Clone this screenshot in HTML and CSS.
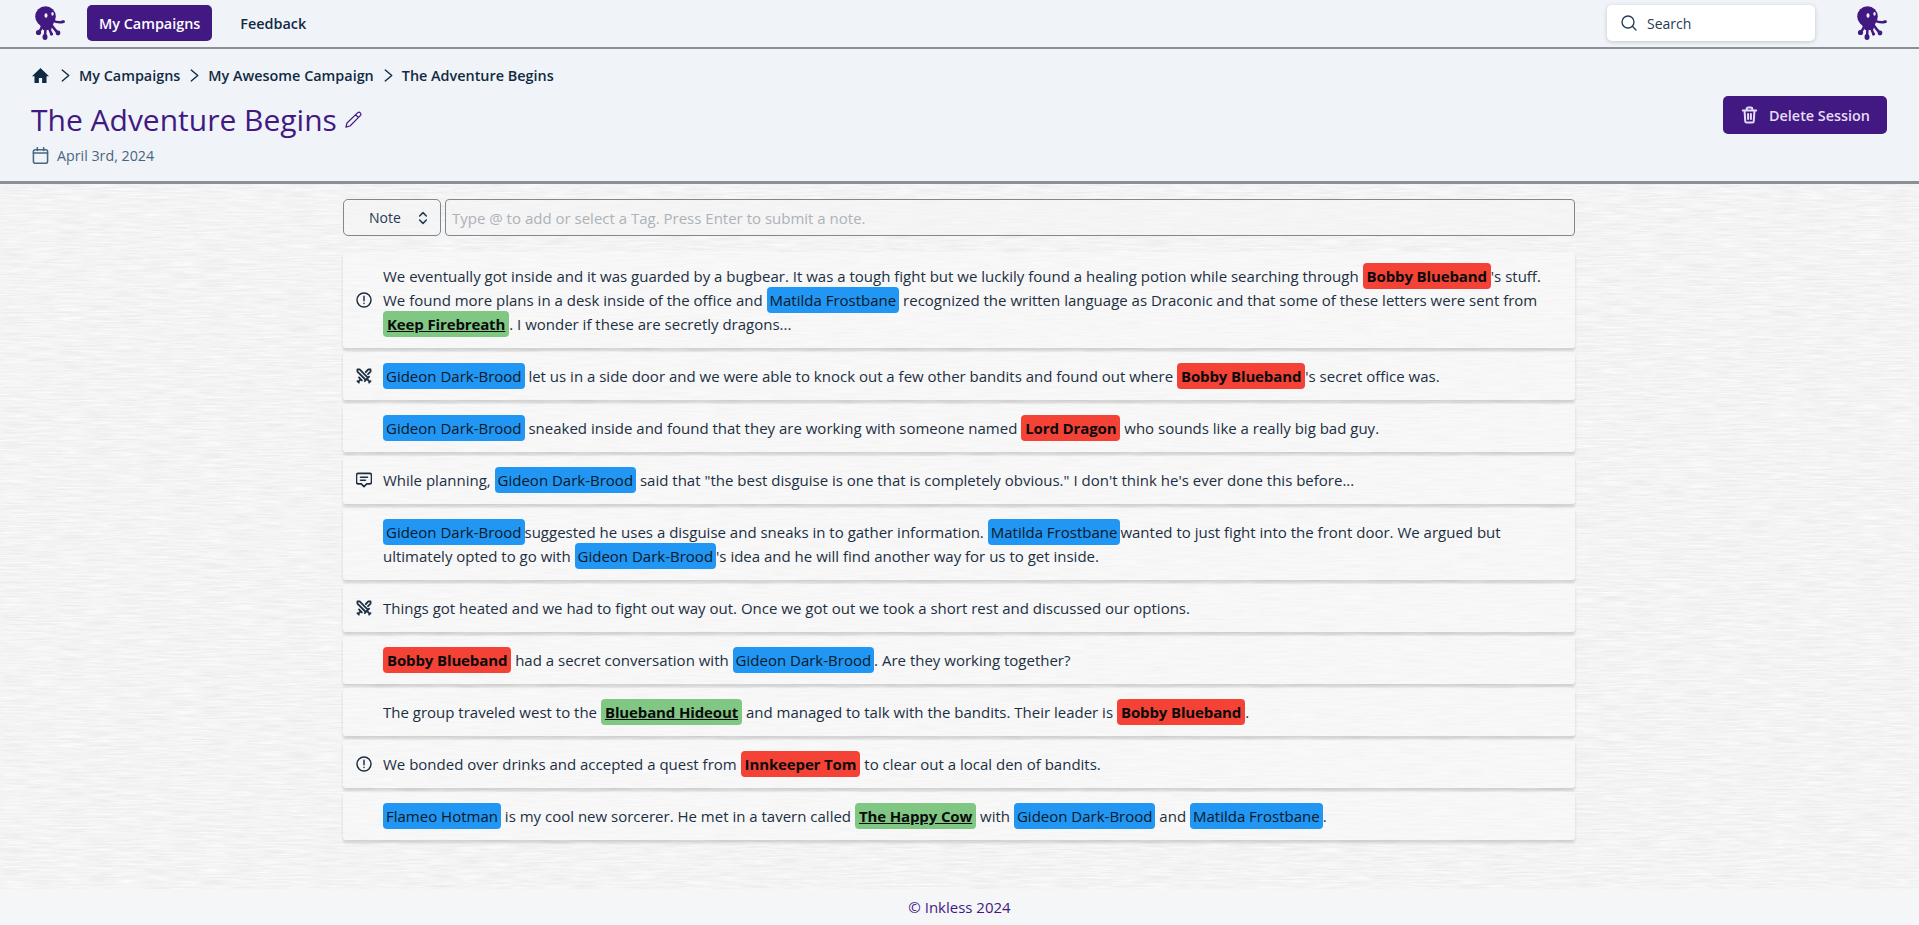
FILE: index.html
```html
<!DOCTYPE html>
<html lang="en">
<head>
<meta charset="utf-8">
<title>The Adventure Begins</title>
<link rel="stylesheet" href="styles.css">
</head>
<body>
<svg class="defs" width="0" height="0" aria-hidden="true">
  <defs>
    <symbol id="octo" viewBox="0 0 30 34">
      <circle cx="10.500" cy="10.500" r="10.300" fill="#421983"/>
      <path fill="#421983" d="M3 16h16l-3 8H8Z"/>
      <g fill="none" stroke="#421983" stroke-width="2.500" stroke-linecap="round">
        <path d="M7 20.500C6 24 4.500 25.500 2.500 26.500"/>
        <path d="M10.500 22 10 31"/>
        <path d="M14 21c.6 3 1.300 5 2.500 7"/>
        <path d="M15 17c2.500 3.500 4.500 6.500 7.500 9.500"/>
        <path d="M18 14.500c3 2 6 2 10 1.500"/>
      </g>
      <circle cx="3.500" cy="26.500" r="2.600" fill="#421983"/>
      <ellipse cx="10" cy="31" rx="2.500" ry="3" fill="#421983"/>
      <circle cx="16.500" cy="28" r="1.600" fill="#421983"/>
      <circle cx="23" cy="27" r="2.400" fill="#421983"/>
      <ellipse cx="28" cy="15.700" rx="2" ry="1.400" fill="#421983"/>
      <ellipse cx="11" cy="9.500" rx="1.500" ry="2.200" fill="#f0f4f8"/>
      <ellipse cx="17.500" cy="7.800" rx="1.200" ry="1.900" fill="#f0f4f8"/>
    </symbol>
    <symbol id="alert" viewBox="0 0 24 24" fill="none" stroke="currentColor" stroke-width="2.200" stroke-linecap="round">
      <circle cx="12" cy="12" r="10.500"/><path d="M12 6.500v6.500M12 17v.1"/>
    </symbol>
    <symbol id="swords" viewBox="1 1 22 22" fill="none" stroke="currentColor" stroke-width="2.500" stroke-linecap="round" stroke-linejoin="round">
      <path d="M14.500 17.500 3 6V3h3l11.500 11.500M13 19l6-6M16 16l4 4M19 21l2-2M14.500 6.500 18 3h3v3l-3.500 3.500M5 14l4 4M7 17l-3 3M3 19l2 2"/>
    </symbol>
    <symbol id="chat" viewBox="0.500 0.500 23 23" fill="none" stroke="currentColor" stroke-width="2.300" stroke-linecap="round" stroke-linejoin="round">
      <path d="M4 2.500h16A2.800 2.800 0 0 1 22.800 5.300v9.400A2.800 2.800 0 0 1 20 17.500h-4l-4 4-4-4H4a2.800 2.800 0 0 1-2.800-2.800V5.300A2.800 2.800 0 0 1 4 2.500Z"/><path d="M7 8h10M7 12.300h7"/>
    </symbol>
  </defs>
</svg>

<header class="topbar">
  <svg class="logo"><use href="#octo"/></svg>
  <a class="nav-link nav-active">My Campaigns</a>
  <a class="nav-link">Feedback</a>
  <div class="spacer"></div>
  <div class="search">
    <svg class="search-icon" viewBox="0 0 24 24" fill="none" stroke="currentColor" stroke-width="2" stroke-linecap="round"><circle cx="10.500" cy="10.500" r="9"/><path d="m17 17 5.500 5.500"/></svg>
    <span>Search</span>
  </div>
  <svg class="logo logo-right"><use href="#octo"/></svg>
</header>

<section class="pagehead">
  <div class="pagehead-main">
    <nav class="crumbs">
      <svg class="home" viewBox="0 0 24 24" fill="currentColor"><path d="M12 1.500 0 13h3.500v9.500h6.200v-7h4.600v7h6.200V13H24L12 1.500Z"/></svg>
      <svg class="chev" viewBox="0 0 24 24" fill="none" stroke="currentColor" stroke-width="2.600" stroke-linecap="round" stroke-linejoin="round"><path d="m6 2 12 10L6 22"/></svg>
      <span>My Campaigns</span>
      <svg class="chev" viewBox="0 0 24 24" fill="none" stroke="currentColor" stroke-width="2.600" stroke-linecap="round" stroke-linejoin="round"><path d="m6 2 12 10L6 22"/></svg>
      <span>My Awesome Campaign</span>
      <svg class="chev" viewBox="0 0 24 24" fill="none" stroke="currentColor" stroke-width="2.600" stroke-linecap="round" stroke-linejoin="round"><path d="m6 2 12 10L6 22"/></svg>
      <span>The Adventure Begins</span>
    </nav>
    <div class="title-row">
      <h1>The Adventure Begins</h1>
      <svg class="pencil" viewBox="0 0 24 24" fill="none" stroke="currentColor" stroke-width="1.600" stroke-linejoin="round"><path d="M18 2.500a2.600 2.600 0 0 1 3.700 3.700L8 20l-5.500 1.500L4 16 18 2.500ZM15.500 5l3.700 3.700"/></svg>
    </div>
    <div class="date">
      <svg class="cal" viewBox="0 0 24 24" fill="none" stroke="currentColor" stroke-width="2.200" stroke-linecap="round"><rect x="2" y="4" width="20" height="19" rx="2.500"/><path d="M7.500 1v4M16.500 1v4M2 8.500h20"/></svg>
      <span>April 3rd, 2024</span>
    </div>
  </div>
  <button class="delete">
    <svg class="trash" viewBox="0 0 24 24" fill="none" stroke="currentColor" stroke-width="2.800" stroke-linecap="round" stroke-linejoin="round"><path d="M2.500 5.500h19M8 5V3.500A2 2 0 0 1 10 1.500h4a2 2 0 0 1 2 2V5M5 5.500l1 15.500a1.800 1.800 0 0 0 1.800 1.500h8.400A1.800 1.800 0 0 0 18 21l1-15.500M10 10.500v7M14 10.500v7"/></svg>
    Delete Session
  </button>
</section>

<main class="main">
  <svg class="paper" width="100%" height="100%" aria-hidden="true">
    <filter id="grain" x="0" y="0" width="100%" height="100%" color-interpolation-filters="sRGB">
      <feTurbulence type="fractalNoise" baseFrequency="0.035 0.6" numOctaves="3" seed="4"/>
      <feColorMatrix type="matrix" values="0.09 0 0 0 0.91  0.09 0 0 0 0.91  0.09 0 0 0 0.91  0 0 0 0 1"/>
    </filter>
    <rect width="100%" height="100%" filter="url(#grain)"/>
  </svg>
  <div class="column">
    <form class="entry">
      <div class="select">
        <span>Note</span>
        <svg class="updown" viewBox="0 0 24 24" fill="none" stroke="currentColor" stroke-width="2.400" stroke-linecap="round" stroke-linejoin="round"><path d="m7 9 5-5 5 5M7 15l5 5 5-5"/></svg>
      </div>
      <input class="note-input" type="text" placeholder="Type @ to add or select a Tag. Press Enter to submit a note.">
    </form>

    <ul class="notes">
      <li class="note">
        <svg class="note-icon"><use href="#alert"/></svg>
        <p>We eventually got inside and it was guarded by a bugbear. It was a tough fight but we luckily found a healing potion while searching through <b class="tag foe">Bobby Blueband</b>'s stuff. We found more plans in a desk inside of the office and <span class="tag pc">Matilda Frostbane</span> recognized the written language as Draconic and that some of these letters were sent from <b class="tag place">Keep Firebreath</b>. I wonder if these are secretly dragons...</p>
      </li>
      <li class="note">
        <svg class="note-icon"><use href="#swords"/></svg>
        <p><span class="tag pc">Gideon Dark-Brood</span> let us in a side door and we were able to knock out a few other bandits and found out where <b class="tag foe">Bobby Blueband</b>'s secret office was.</p>
      </li>
      <li class="note">
        <span class="note-icon"></span>
        <p><span class="tag pc">Gideon Dark-Brood</span> sneaked inside and found that they are working with someone named <b class="tag foe">Lord Dragon</b> who sounds like a really big bad guy.</p>
      </li>
      <li class="note">
        <svg class="note-icon"><use href="#chat"/></svg>
        <p>While planning, <span class="tag pc">Gideon Dark-Brood</span> said that "the best disguise is one that is completely obvious." I don't think he's ever done this before...</p>
      </li>
      <li class="note">
        <span class="note-icon"></span>
        <p><span class="tag pc">Gideon Dark-Brood</span>suggested he uses a disguise and sneaks in to gather information. <span class="tag pc">Matilda Frostbane</span>wanted to just fight into the front door. We argued but ultimately opted to go with <span class="tag pc">Gideon Dark-Brood</span>'s idea and he will find another way for us to get inside.</p>
      </li>
      <li class="note">
        <svg class="note-icon"><use href="#swords"/></svg>
        <p>Things got heated and we had to fight out way out. Once we got out we took a short rest and discussed our options.</p>
      </li>
      <li class="note">
        <span class="note-icon"></span>
        <p><b class="tag foe">Bobby Blueband</b> had a secret conversation with <span class="tag pc">Gideon Dark-Brood</span>. Are they working together?</p>
      </li>
      <li class="note">
        <span class="note-icon"></span>
        <p>The group traveled west to the <b class="tag place">Blueband Hideout</b> and managed to talk with the bandits. Their leader is <b class="tag foe">Bobby Blueband</b>.</p>
      </li>
      <li class="note">
        <svg class="note-icon"><use href="#alert"/></svg>
        <p>We bonded over drinks and accepted a quest from <b class="tag foe">Innkeeper Tom</b> to clear out a local den of bandits.</p>
      </li>
      <li class="note">
        <span class="note-icon"></span>
        <p><span class="tag pc">Flameo Hotman</span> is my cool new sorcerer. He met in a tavern called <b class="tag place">The Happy Cow</b> with <span class="tag pc">Gideon Dark-Brood</span> and <span class="tag pc">Matilda Frostbane</span>.</p>
      </li>
    </ul>
  </div>
</main>

<footer class="footer">© Inkless 2024</footer>
</body>
</html>
```
FILE: styles.css
```css
* { box-sizing: border-box; }
html, body { height: 100%; }
body {
  margin: 0;
  display: flex;
  flex-direction: column;
  height: 925px;
  overflow: hidden;
  font-family: "Open Sans", "Noto Sans", sans-serif;
  font-size: 14px;
  color: #102a43;
  background: #f0f4f8;
}
.defs { position: absolute; }

.topbar {
  display: flex;
  align-items: center;
  height: 49px;
  flex: none;
  padding: 0 32px 1px 35px;
  border-bottom: 2px solid #8d8f96;
  background: #f0f4f8;
}
.logo { width: 30px; height: 34px; margin: 0 22px 0 0; flex: none; }
.logo-right { margin: 0; }
.nav-link {
  display: flex;
  align-items: center;
  height: 36px;
  padding: 0 12px;
  margin-right: 16px;
  border-radius: 5px;
  font-weight: 600;
  font-size: 14.400px;
  color: #102a43;
}
.nav-active { background: #421983; color: #fff; }
.spacer { flex: 1; }
.search {
  display: flex;
  align-items: center;
  gap: 10px;
  width: 208px;
  height: 36px;
  padding: 0 14px;
  margin-right: 42px;
  background: #fff;
  border-radius: 5px;
  box-shadow: 0 1px 4px rgba(16, 42, 67, .22);
  font-size: 14px;
  color: #243b53;
}
.search-icon { width: 16px; height: 16px; flex: none; }

.pagehead {
  display: flex;
  align-items: flex-start;
  justify-content: space-between;
  flex: none;
  height: 135px;
  padding: 16px 32px 0 32px;
  border-bottom: 3px solid #8d8f96;
  background: #f0f4f8;
}
.crumbs {
  display: flex;
  align-items: center;
  height: 20px;
  font-weight: 600;
  font-size: 14.400px;
  color: #102a43;
}
.home { width: 17px; height: 17px; margin-right: 10px; }
.chev { width: 13px; height: 13px; margin: 0 7px 0 0; flex: none; }
.crumbs span { margin-right: 8px; }
.title-row { display: flex; align-items: center; gap: 7px; margin-top: 15px; margin-left: -1px; }
h1 {
  margin: 0;
  font-weight: 400;
  font-size: 30px;
  line-height: 40px;
  color: #421983;
}
.pencil { width: 18px; height: 18px; color: #421983; }
.date {
  display: flex;
  align-items: center;
  gap: 8px;
  margin-top: 6px;
  font-size: 14.250px;
  color: #486581;
}
.cal { width: 17px; height: 17px; color: #486581; }
.delete {
  display: flex;
  align-items: center;
  gap: 11px;
  height: 38px;
  width: 164px;
  padding: 0 18px;
  margin-top: 31px;
  border: 0;
  border-radius: 5px;
  background: #421983;
  color: #e6dcf7;
  font-family: inherit;
  font-weight: 600;
  font-size: 14.400px;
  white-space: nowrap;
}
.trash { width: 17px; height: 18px; flex: none; }

.main {
  position: relative;
  flex: 1;
  min-height: 0;
  display: flex;
  justify-content: center;
  background: #f5f5f5;
  overflow: hidden;
}
.paper { position: absolute; inset: 0; }
.column {
  position: relative;
  width: 1232px;
  margin-right: 1px;
  padding-top: 15px;
}
.entry { display: flex; gap: 4px; height: 37px; }
.select {
  display: flex;
  align-items: center;
  justify-content: space-between;
  flex: none;
  width: 98px;
  padding: 0 9px 0 25px;
  border: 1px solid #7f8790;
  border-radius: 5px;
  background: rgba(245, 245, 245, .6);
  font-size: 14px;
  color: #243b53;
}
.updown { width: 16px; height: 16px; }
.note-input {
  flex: 1;
  min-width: 0;
  padding: 0 6px;
  border: 1px solid #7f8790;
  border-radius: 4px;
  background: rgba(245, 245, 245, .6);
  font-family: inherit;
  font-size: 15px;
  color: #243b53;
}
.note-input::placeholder { color: #adb2b8; opacity: 1; }

.notes {
  list-style: none;
  margin: 16px 0 0;
  padding: 0;
  display: flex;
  flex-direction: column;
  gap: 4px;
}
.note {
  display: flex;
  align-items: center;
  gap: 11px;
  padding: 12px 12px 12px 13px;
  background: rgba(250, 250, 250, .55);
  border-radius: 3px;
  box-shadow: 0 3px 3px rgba(0, 0, 0, .14);
  color: #1c2f42;
}
.note-icon { width: 16px; height: 16px; flex: none; color: #1c2f42; }
.note p {
  margin: 0;
  font-size: 15px;
  line-height: 24px;
}
.tag {
  padding: 3px 3px;
  border-radius: 4px;
  color: #0a1a2a;
}
b.tag { padding: 3px 4px; font-weight: 700; letter-spacing: -.13px; color: #0b0b0b; }
.pc { background: #2196f3; }
.foe { background: #f44336; }
.place { background: #81c784; text-decoration: underline; }

.footer {
  flex: none;
  height: 36px;
  display: flex;
  align-items: center;
  justify-content: center;
  background: #f4f6f8;
  font-size: 15px;
  color: #421983;
}
```
